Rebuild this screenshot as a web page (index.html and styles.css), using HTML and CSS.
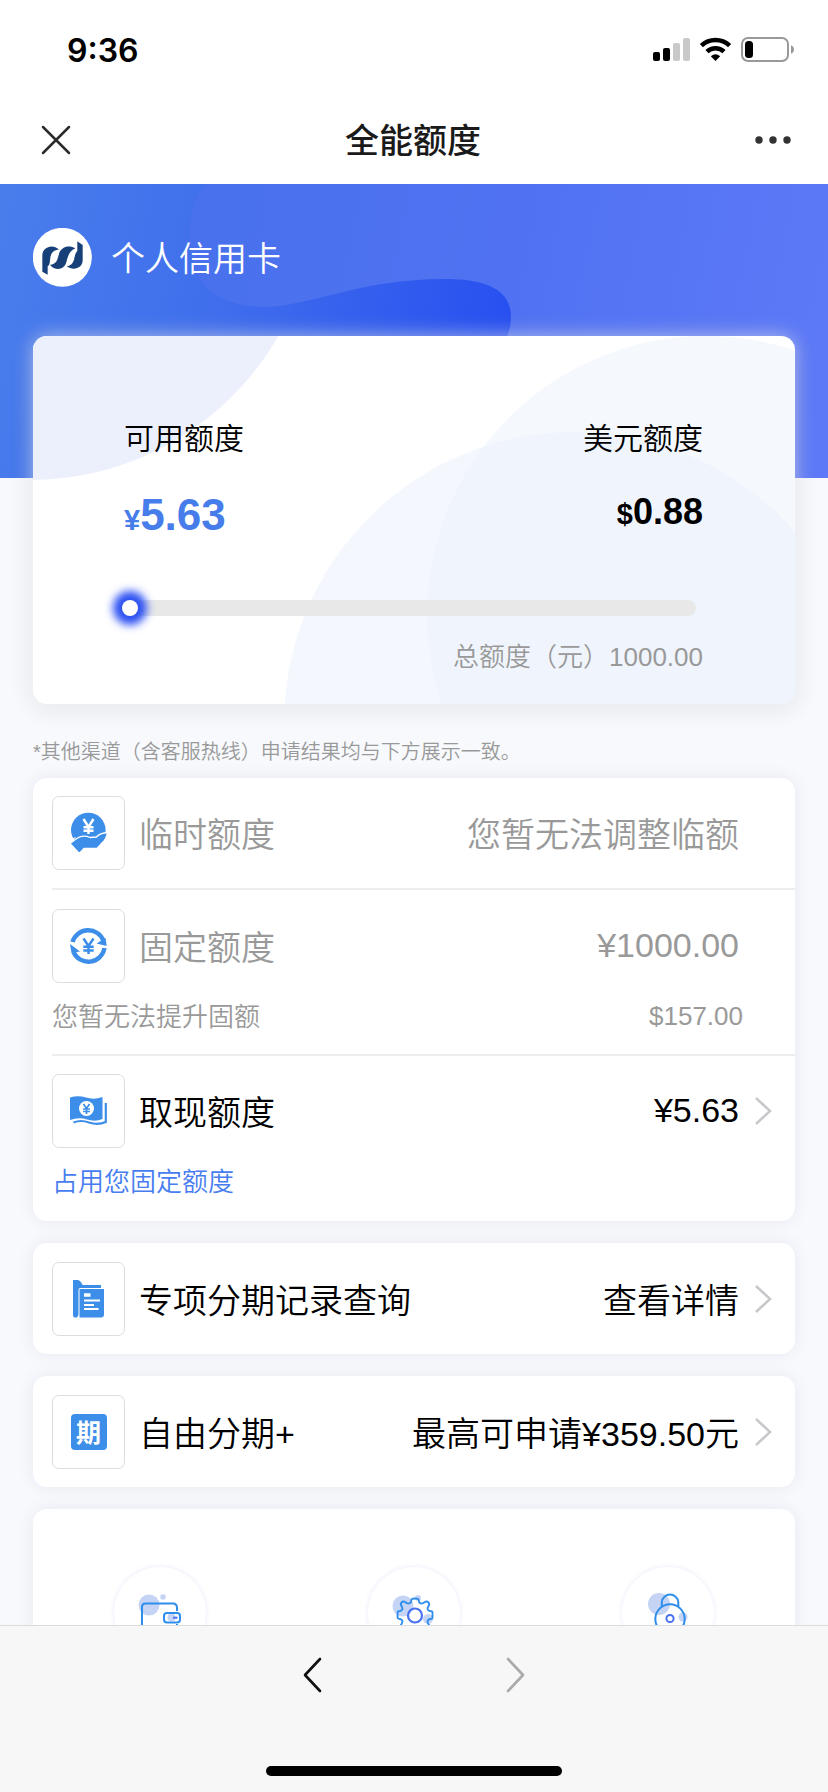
FILE: index.html
```html
<!DOCTYPE html>
<html lang="zh-CN">
<head>
<meta charset="utf-8">
<title>全能额度</title>
<link rel="stylesheet" href="styles.css">
</head>
<body>
<div class="app">
  <header class="status">
    <span class="time">9:36</span>
    <svg class="status-icons" width="142" height="26" viewBox="0 0 142 26">
      <rect x="0" y="15" width="7" height="9" rx="2"/>
      <rect x="10" y="11" width="7" height="13" rx="2"/>
      <rect x="20" y="6" width="7" height="18" rx="2" fill="#c9c9c9"/>
      <rect x="30" y="1" width="7" height="23" rx="2" fill="#c9c9c9"/>
      <g fill="none" stroke="#000" stroke-width="4.6">
        <path d="M48.400 8.600A20.500 20.500 0 0 1 76.600 8.600"/>
        <path d="M54 14.600A12.600 12.600 0 0 1 71 14.600"/>
      </g>
      <path d="M57.800 19.200A7.500 7.500 0 0 1 67.200 19.200L62.500 24Z"/>
      <rect x="89" y="1" width="46" height="23" rx="6" fill="none" stroke="#999" stroke-width="2"/>
      <rect x="92" y="4" width="8" height="17" rx="3.500"/>
      <path d="M138 8.300c4 1.500 4 7 0 8.500Z" fill="#999"/>
    </svg>
  </header>
  <nav class="nav">
    <svg width="30" height="30" viewBox="0 0 30 30"><path d="M2 2L28 28M28 2L2 28" stroke="#2b2b2b" stroke-width="2.500" stroke-linecap="round"/></svg>
    <h1 class="title">全能额度</h1>
    <svg width="36" height="8" viewBox="0 0 36 8" fill="#333"><circle cx="4" cy="4" r="3.700"/><circle cx="18" cy="4" r="3.700"/><circle cx="32" cy="4" r="3.700"/></svg>
  </nav>
  <main class="content">
    <section class="hero">
      <svg class="hero-bg" width="828" height="294" viewBox="0 0 828 294">
        <defs>
          <linearGradient id="base" gradientUnits="userSpaceOnUse" x1="0" y1="20" x2="510" y2="120"><stop offset="0" stop-color="#497dec"/><stop offset=".45" stop-color="#406eec"/><stop offset="1" stop-color="#2850f0"/></linearGradient>
          <linearGradient id="wave" gradientUnits="userSpaceOnUse" x1="190" y1="40" x2="828" y2="160"><stop offset="0" stop-color="#4971ec"/><stop offset=".5" stop-color="#5072f2"/><stop offset="1" stop-color="#5d79f7"/></linearGradient>
        </defs>
        <rect width="828" height="294" fill="url(#base)"/>
        <path d="M206 0C191 18 190 35 190 55C191 100 217 123 266 123C310 122 360 95 445 95C485 95 511 105 511 133C511 142 509 148 506 155L490 294H828V0Z" fill="url(#wave)"/>
      </svg>
      <div class="bank">
        <svg class="logo" width="60" height="60" viewBox="9 9 180 180">
          <circle cx="97" cy="97" r="88.500" fill="#fff"/>
          <g fill="#174079">
            <path d="M37 140V92C37 66 68 55 87 74C70 74 63 84 61 98C59 110 61 118 53 124V149Z"/>
            <path d="M136 70C116 58 93 66 87 86C82 106 79 118 60 119C74 138 102 137 109 112C114 92 118 78 136 70Z"/>
            <path d="M142 49L158 60V106C158 130 130 138 110 124C125 122 131 112 133 100C135 88 138 82 142 78Z"/>
          </g>
        </svg>
        <span>个人信用卡</span>
      </div>
    </section>

    <section class="summary">
      <svg class="summary-bg" width="762" height="368" viewBox="0 0 762 368">
        <circle cx="-3" cy="-142" r="286" fill="#ecf0fc"/>
        <circle cx="673" cy="279" r="279" fill="#f5f8fd"/>
        <circle cx="542" cy="387" r="291" fill="#ebf2fe" fill-opacity=".55"/>
      </svg>
      <div class="summary-body">
        <div class="pair"><span>可用额度</span><span>美元额度</span></div>
        <div class="pair amounts">
          <strong class="cny"><small>¥</small>5.63</strong>
          <strong class="usd"><small>$</small>0.88</strong>
        </div>
        <div class="track"><i class="knob"></i></div>
        <div class="total">总额度（元）1000.00</div>
      </div>
    </section>

    <p class="note">*其他渠道（含客服热线）申请结果均与下方展示一致。</p>

    <section class="card list">
      <div class="item muted">
        <div class="row">
          <span class="icon"><svg width="73" height="74" viewBox="0 0 73 74">
            <circle cx="36.300" cy="34" r="17.300" fill="#3d8ee9"/>
            <path d="M18 47.500L24.700 42.500Q31 38.500 38 41.500L44.500 41Q48 37 55.500 36.500Q54.500 43 50 47L45 52.500H32L27.300 57.500Z" fill="#3d8ee9" stroke="#fff" stroke-width="1.300"/>
            <path d="M15 44L24 41L18 48L27 58H15ZM33 53.300H50V58H29Z" fill="#fff"/>
            <path d="M31.500 23L36.500 31L41.500 23M36.500 30V38M31.500 31.200H41.500M31.500 34.800H41.500" fill="none" stroke="#fff" stroke-width="2.500"/>
          </svg></span>
          <span class="label">临时额度</span><span class="value">您暂无法调整临额</span>
        </div>
      </div>
      <div class="item muted second">
        <div class="row">
          <span class="icon"><svg width="73" height="74" viewBox="0 0 73 74">
            <g fill="none" stroke="#3d8ee9" stroke-width="4.400"><path d="M20.500 33A16.300 16.300 0 0 1 51.500 32"/><path d="M52.500 39A16.300 16.300 0 0 1 21.500 43"/></g>
            <path d="M44.500 34.500L54.700 37L53.500 29ZM18 35L28 42.500L19.500 44Z" fill="#3d8ee9"/>
            <path d="M31.500 29.500L36.500 37L41.500 29.500M36.500 36V45M31.300 37.700H41.700M31.300 41.500H41.700" fill="none" stroke="#3d8ee9" stroke-width="2.500"/>
          </svg></span>
          <span class="label">固定额度</span><span class="value number">¥1000.00</span>
        </div>
        <div class="sub"><span>您暂无法提升固额</span><span class="sub-value">$157.00</span></div>
      </div>
      <div class="item third">
        <div class="row">
          <span class="icon"><svg width="73" height="74" viewBox="0 0 73 74">
            <path d="M18 23.500Q26 21 34 23.500Q42 26 50.500 23V45Q43 48 35 45.500Q27 43 18 46Z" fill="#3d8ee9"/>
            <path d="M21.500 48.500Q29 45.500 37 48.500Q46 51.500 53.800 48V29" fill="none" stroke="#3d8ee9" stroke-width="2.200"/>
            <circle cx="34.500" cy="34.500" r="7.500" fill="#fff"/>
            <path d="M31.500 30L34.500 34.500L37.500 30M34.500 34V40M31 35H38M31 37.500H38" fill="none" stroke="#3d8ee9" stroke-width="1.700"/>
          </svg></span>
          <span class="label">取现额度</span><span class="value number">¥5.63</span>
          <svg class="chev" width="18" height="30" viewBox="0 0 18 30"><path d="M2 2L16 15L2 28"/></svg>
        </div>
        <div class="sub link"><span>占用您固定额度</span></div>
      </div>
    </section>

    <section class="card single">
      <div class="row">
        <span class="icon"><svg width="73" height="74" viewBox="0 0 73 74">
          <path d="M21 18H26Q29 19 30.500 23H49V26H28Q26.500 26 26.500 28V53L25 55.500H23Q21 55.500 21 53Z" fill="#3d8ee9"/>
          <path d="M27.500 27H52V52.500Q52 55.500 49 55.500H27.500Z" fill="#3d8ee9"/>
          <path d="M32 33H38.500" stroke="#fff" stroke-width="3.500"/>
          <path d="M32 38.500H48M32 43H42M32 47H46.500" stroke="#fff" stroke-width="2"/>
        </svg></span>
        <span class="label">专项分期记录查询</span><span class="value">查看详情</span>
        <svg class="chev" width="18" height="30" viewBox="0 0 18 30"><path d="M2 2L16 15L2 28"/></svg>
      </div>
    </section>

    <section class="card single">
      <div class="row">
        <span class="icon"><b class="stamp">期</b></span>
        <span class="label">自由分期+</span><span class="value">最高可申请¥359.50元</span>
        <svg class="chev" width="18" height="30" viewBox="0 0 18 30"><path d="M2 2L16 15L2 28"/></svg>
      </div>
    </section>

    <section class="card services">
      <span class="round"><svg width="92" height="92" viewBox="0 0 92 92">
        <circle cx="35" cy="38" r="10.500" fill="#c5d3f5"/><circle cx="49" cy="30" r="2.800" fill="#c5d3f5"/><circle cx="57.500" cy="50.500" r="4" fill="#c5d3f5"/>
        <path d="M28 70V40Q28 36.500 31.500 36.500H59Q63 36.500 63 41V44M63 57V70" fill="none" stroke="#2f8eeb" stroke-width="2"/>
        <rect x="50" y="46" width="16" height="9.500" rx="3" fill="none" stroke="#2f8eeb" stroke-width="2"/><path d="M59 50.700H63.500" stroke="#4971f0" stroke-width="2"/>
      </svg></span>
      <span class="round"><svg width="92" height="92" viewBox="0 0 92 92">
        <circle cx="35" cy="39" r="10.500" fill="#c5d3f5"/><circle cx="50" cy="31" r="3" fill="#c5d3f5"/><circle cx="60" cy="52" r="5" fill="#c5d3f5"/>
        <path d="M43 35C43 31.500 44 31.500 47 31.500S51 31.500 51 35Q53 38.200 57 35C59.500 33.500 62.500 36.500 60.500 39Q58 43 62 44C65 44 64.500 45 64.500 48S65 52 62 52Q58 53 60.500 57C62.500 60 59.500 62.500 57 61Q53 58 51 61V64H43V61Q41 58 37 61C34.500 62.500 31.500 60 33.500 57Q36 53 32 52C29.500 52 29.500 51 29.500 48S29.500 44 32 44Q36 43 33.500 39C31.500 36.500 34.500 33.500 37 35Q41 38.200 43 35Z" fill="none" stroke="#2f8eeb" stroke-width="1.900"/>
        <circle cx="47" cy="48.500" r="7" fill="none" stroke="#4971f0" stroke-width="2.200"/>
      </svg></span>
      <span class="round"><svg width="92" height="92" viewBox="0 0 92 92">
        <circle cx="37" cy="37" r="11" fill="#c5d3f5"/><circle cx="61" cy="50" r="4.500" fill="#c5d3f5"/>
        <circle cx="48" cy="52" r="14.700" fill="none" stroke="#2f8eeb" stroke-width="2"/>
        <path d="M39.800 39V35A8.300 8.300 0 0 1 56.300 35V39" fill="none" stroke="#2f8eeb" stroke-width="2"/>
        <circle cx="48" cy="51.500" r="3.600" fill="none" stroke="#4971f0" stroke-width="2"/>
      </svg></span>
    </section>
  </main>
  <footer class="toolbar">
    <div class="arrows">
      <svg width="20" height="36" viewBox="0 0 20 36"><path d="M18 2L3 18L18 34" stroke="#111"/></svg>
      <svg width="20" height="36" viewBox="0 0 20 36"><path d="M2 2L17 18L2 34" stroke="#aaa"/></svg>
    </div>
    <div class="home"></div>
  </footer>
</div>
</body>
</html>
```
FILE: styles.css
```css
* { box-sizing: border-box; }
body { margin: 0; }
.app {
  width: 828px;
  height: 1792px;
  display: flex;
  flex-direction: column;
  overflow: hidden;
  background: #f7f9fd;
  color: #000;
  font-family: "Liberation Sans", "Noto Sans CJK SC", sans-serif;
  font-weight: 350;
}
svg { display: block; flex: none; }

.status {
  height: 88px;
  flex: none;
  display: flex;
  justify-content: space-between;
  padding: 30px 33px 0 67px;
  background: #fff;
}
.time { font: 600 32px/41px Inter, sans-serif; }
.status-icons { margin: 7px 0 0; }
.nav {
  height: 96px;
  flex: none;
  display: flex;
  align-items: center;
  justify-content: space-between;
  padding: 7px 37px 0 41px;
  background: #fff;
}
.title {
  margin: 0 0 2px;
  font: 500 34px/50px "Noto Sans CJK SC", sans-serif;
  color: #1a1a1a;
}

.content { flex: 1; min-height: 0; overflow: hidden; }
.hero { position: relative; height: 294px; overflow: hidden; }
.hero-bg { position: absolute; inset: 0; }
.bank {
  position: relative;
  display: flex;
  align-items: center;
  gap: 18px;
  padding: 43px 0 0 33px;
  color: #fff;
  font-size: 34px;
  line-height: 60px;
}
.bank span { padding-top: 2px; }

.summary {
  position: relative;
  width: 762px;
  height: 368px;
  margin: -142px 33px 0;
  border-radius: 14px;
  background: #fff;
  box-shadow: 0 0 20px rgba(255, 255, 255, .6), 0 3px 24px rgba(0, 0, 0, .12);
}
.summary-bg { position: absolute; inset: 0; border-radius: 14px; }
.summary-body { position: relative; padding: 83px 92px 0 91px; }
.pair {
  display: flex;
  justify-content: space-between;
  font-size: 30px;
  line-height: 40px;
}
.amounts { margin-top: 30px; line-height: 52px; }
.amounts strong { font-weight: 700; }
.amounts small { font-size: 29px; }
.cny { font-size: 44px; color: #477deb; }
.usd { font-size: 36px; margin-top: -3px; }
.track {
  position: relative;
  height: 16px;
  margin: 54px 7px 0 -2px;
  border-radius: 8px;
  background: #e8e8e8;
}
.knob {
  position: absolute;
  left: 0;
  top: 0;
  width: 16px;
  height: 16px;
  border-radius: 50%;
  background: #fff;
  box-shadow: 0 0 8px 9px #2b50f2;
}
.total {
  margin-top: 21px;
  text-align: right;
  font-size: 26px;
  line-height: 40px;
  color: #999;
}
.note {
  margin: 33px 33px 11px;
  font-size: 20px;
  line-height: 30px;
  color: #999;
}

.card {
  margin: 0 33px 22px;
  border-radius: 14px;
  background: #fff;
  box-shadow: 0 0 18px rgba(30, 30, 50, .07);
}
.list { padding-left: 19px; height: 443px; }
.item { border-bottom: 2px solid #ededed; height: 112px; padding-top: 18px; }
.second { height: 166px; padding-top: 19px; }
.third { height: 165px; border-bottom: 0; }
.muted { color: #999; }
.row {
  display: flex;
  align-items: center;
  height: 74px;
  font-size: 34px;
  line-height: 50px;
}
.icon {
  flex: none;
  display: grid;
  place-items: center;
  width: 73px;
  height: 74px;
  border: 1px solid #ddd;
  border-radius: 7px;
}
.icon svg { margin: -1px; }
.label { margin-left: 14px; padding-top: 3px; }
.value { margin: 0 56px 0 auto; padding-top: 3px; }
.value:has(+ .chev) { margin-right: 15px; }
.value.number { padding: 0 0 2px; }
.chev {
  margin-right: 23px;
  fill: none;
  stroke: #c7c7cc;
  stroke-width: 2.5;
}
.sub {
  display: flex;
  justify-content: space-between;
  margin: 14px 52px 0 0;
  font-size: 26px;
  line-height: 40px;
}
.sub-value { margin-top: -1px; }
.link { color: #477df0; }
.single { height: 111px; padding: 19px 0 0 19px; }
.stamp {
  width: 36px;
  height: 36px;
  border-radius: 4px;
  background: #3d8ee9;
  color: #fff;
  text-align: center;
  font: 700 25px/35px "Noto Sans CJK SC", sans-serif;
}
.services {
  display: grid;
  grid-template-columns: repeat(3, 1fr);
  justify-items: center;
  height: 300px;
  padding-top: 58px;
}
.round {
  width: 92px;
  height: 92px;
  border-radius: 50%;
  box-shadow: 0 0 4px 1px #efeffb;
}

.toolbar {
  height: 167px;
  flex: none;
  border-top: 1px solid #dcdcdc;
  background: #f7f7f7;
}
.arrows {
  display: flex;
  justify-content: center;
  gap: 184px;
  padding-top: 31px;
}
.arrows path {
  fill: none;
  stroke-width: 2.6;
  stroke-linecap: round;
  stroke-linejoin: round;
}
.home {
  width: 296px;
  height: 10px;
  margin: 73px auto 0;
  border-radius: 5px;
  background: #000;
}
```
